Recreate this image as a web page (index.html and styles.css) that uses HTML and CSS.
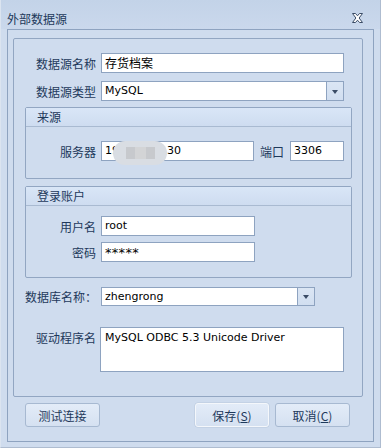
FILE: index.html
```html
<!DOCTYPE html>
<html lang="zh">
<head>
  <meta charset="UTF-8" />
  <title>外部数据源</title>
  <link rel="stylesheet" href="styles.css">
</head>
<body>
  <div class="window">
    <div class="titlebar">
      <span class="title">外部数据源</span>
      <svg class="close" width="11" height="10" viewBox="0 0 11 10">
        <path d="M0.5 0.5h3l2 2.3 2-2.3h3l-3.4 4.5 3.4 4.5h-3l-2-2.3-2 2.3h-3l3.4-4.5z" fill="#fff" stroke="#3b4c66" stroke-width="1" stroke-linejoin="round"/>
      </svg>
    </div>

    <div class="frame">
      <div class="panel">
        <div class="row row-name">
          <label class="lbl">数据源名称</label>
          <div class="input wide">存货档案</div>
        </div>
        <div class="row row-type">
          <label class="lbl">数据源类型</label>
          <div class="combo wide">
            <span class="combo-text">MySQL</span>
            <span class="drop"><i></i></span>
          </div>
        </div>

        <!-- 来源 -->
        <div class="group group-src">
          <div class="group-head">来源</div>
          <div class="group-body">
            <div class="row">
              <label class="lbl">服务器</label>
              <div class="input server">
                <span>19</span><span class="gap"></span><span>30</span>
                <div class="blur"><b></b><b></b><b></b></div>
              </div>
              <label class="lbl-port">端口</label>
              <div class="input port">3306</div>
            </div>
          </div>
        </div>

        <!-- 登录账户 -->
        <div class="group group-login">
          <div class="group-head">登录账户</div>
          <div class="group-body">
            <div class="row">
              <label class="lbl">用户名</label>
              <div class="input short">root</div>
            </div>
            <div class="row row-pwd">
              <label class="lbl">密码</label>
              <div class="input short pwd">*****</div>
            </div>
          </div>
        </div>

        <div class="row row-db">
          <label class="lbl-db">数据库名称：</label>
          <div class="combo db">
            <span class="combo-text">zhengrong</span>
            <span class="drop"><i></i></span>
          </div>
        </div>

        <div class="row row-driver">
          <label class="lbl">驱动程序名</label>
          <div class="memo">MySQL ODBC 5.3 Unicode Driver</div>
        </div>
      </div>

      <div class="buttons">
        <button class="btn btn-test">测试连接</button>
        <span class="spacer"></span>
        <button class="btn btn-save default">保存(<u>S</u>)</button>
        <button class="btn btn-cancel">取消(<u>C</u>)</button>
      </div>
    </div>
  </div>
</body>
</html>
```

FILE: styles.css
```css
html, body {
  margin: 0;
  padding: 0;
}

body {
  width: 381px;
  height: 448px;
  overflow: hidden;
  font-family: "DejaVu Sans", "Noto Sans CJK SC", sans-serif;
  font-size: 11px;
  color: #1e395b;
}

.window {
  width: 381px;
  height: 448px;
  box-sizing: border-box;
  background-color: #cfdcee;
  border-left: 1px solid #dbe4f0;
  border-right: 1px solid #aebcd0;
  border-bottom: 1px solid #aebcd0;
}

.titlebar {
  height: 29px;
  display: flex;
  align-items: center;
  padding: 0 0 0 6px;
  background: linear-gradient(#c3d3e8, #cad8ec);
}

.title {
  font-family: "Noto Sans CJK SC", sans-serif;
  font-size: 12px;
  color: #1e395b;
  flex: 1;
  margin-top: 8px;
}

.close {
  margin-right: 17px;
  margin-top: 6px;
}

.frame {
  margin: 0 6px 0 6px;
  height: 413px;
  box-sizing: border-box;
  border: 1px solid #8ea3c0;
  padding: 8px 10px 0 5px;
}

.panel {
  height: 359px;
  box-sizing: border-box;
  border: 1px solid #92a6c2;
  border-radius: 2px;
  padding-top: 14px;
}

.row {
  display: flex;
  align-items: center;
}

.row-type {
  margin-top: 8px;
}

.lbl {
  width: 82px;
  margin-right: 5px;
  text-align: right;
  font-family: "Noto Sans CJK SC", sans-serif;
  font-size: 12px;
  color: #1e395b;
}

.input {
  height: 20px;
  box-sizing: border-box;
  background: #fff;
  border: 1px solid #8ea3c0;
  padding: 0 3px;
  line-height: 18px;
  color: #000;
  font-size: 11px;
  position: relative;
}

.input.wide,
.combo.wide {
  width: 243px;
}

.row-name .input {
  font-family: "Noto Sans CJK SC", sans-serif;
  font-size: 12px;
}

.combo {
  height: 20px;
  box-sizing: border-box;
  background: #fff;
  border: 1px solid #8ea3c0;
  display: flex;
  color: #000;
  font-size: 11px;
  line-height: 18px;
}

.combo-text {
  flex: 1;
  padding-left: 3px;
}

.drop {
  width: 16px;
  border-left: 1px solid #8ea3c0;
  background: linear-gradient(#dbe6f4, #d1def0);
  display: flex;
  align-items: center;
  justify-content: center;
}

.drop i {
  width: 0;
  height: 0;
  border-left: 3.5px solid transparent;
  border-right: 3.5px solid transparent;
  border-top: 4px solid #3b4c66;
  margin-top: 1px;
}

/* group boxes */
.group {
  margin-left: 11px;
  width: 327px;
  box-sizing: border-box;
  border: 1px solid #92a6c2;
  border-radius: 2px;
}

.group-src {
  margin-top: 6px;
  height: 72px;
}

.group-login {
  margin-top: 7px;
  height: 92px;
}

.group-head {
  height: 18px;
  line-height: 18px;
  padding-left: 11px;
  border-bottom: 1px solid #a9bad1;
  background: linear-gradient(#d9e6f7, #cedcf0);
  font-family: "Noto Sans CJK SC", sans-serif;
  font-size: 12px;
  color: #1e395b;
}

.group-src .group-body {
  padding-top: 14px;
}

.group-login .group-body {
  padding-top: 10px;
}

.group .lbl {
  width: 70px;
}

.input.server {
  width: 153px;
}

.gap {
  display: inline-block;
  width: 48px;
}

.blur {
  position: absolute;
  left: 11px;
  top: -1px;
  width: 54px;
  height: 24px;
  border-radius: 12px;
  background: #d9dde3;
  display: flex;
  justify-content: center;
  align-items: center;
}

.blur b {
  width: 9px;
  height: 12px;
  background: #c7c9cd;
}

.blur b:nth-child(2) {
  background: #d3d4d6;
  width: 11px;
}

.lbl-port {
  margin: 0 6px 0 6px;
  font-family: "Noto Sans CJK SC", sans-serif;
  font-size: 12px;
  color: #1e395b;
}

.input.port {
  width: 54px;
}

.input.short {
  width: 154px;
}

.row-pwd {
  margin-top: 6px;
}

.pwd {
  font-size: 13px;
  letter-spacing: 0.3px;
  line-height: 20px;
}

.row-db {
  margin-top: 9px;
}

.lbl-db {
  margin-left: 11px;
  width: 76px;
  font-family: "Noto Sans CJK SC", sans-serif;
  font-size: 12px;
  color: #1e395b;
}

.combo.db {
  width: 214px;
  height: 19px;
  line-height: 17px;
}

.row-driver {
  margin-top: 21px;
  align-items: flex-start;
}

.row-driver .lbl {
  margin-right: 4px;
  margin-top: 2px;
}

.memo {
  width: 244px;
  height: 45px;
  box-sizing: border-box;
  background: #fff;
  border: 1px solid #8ea3c0;
  padding: 2px 4px;
  color: #000;
  font-size: 11px;
  line-height: 15px;
}

/* buttons */
.buttons {
  display: flex;
  margin-top: 6px;
  padding-left: 12px;
  padding-right: 13px;
}

.spacer {
  flex: 1;
}

.btn {
  height: 24px;
  width: 75px;
  box-sizing: border-box;
  border: 1px solid #a7b9d1;
  border-radius: 3px;
  background: linear-gradient(#e3ecf8, #d5e1f1);
  font-family: "Noto Sans CJK SC", sans-serif;
  font-size: 12px;
  color: #1e395b;
  padding: 0;
  cursor: pointer;
}

.btn u {
  text-decoration: underline;
}

.btn-save {
  width: 74px;
  margin-right: 6px;
}

.btn.default {
  border-color: #f4f7fb;
  box-shadow: 0 0 0 0.5px #b9c8dc;
}
```
